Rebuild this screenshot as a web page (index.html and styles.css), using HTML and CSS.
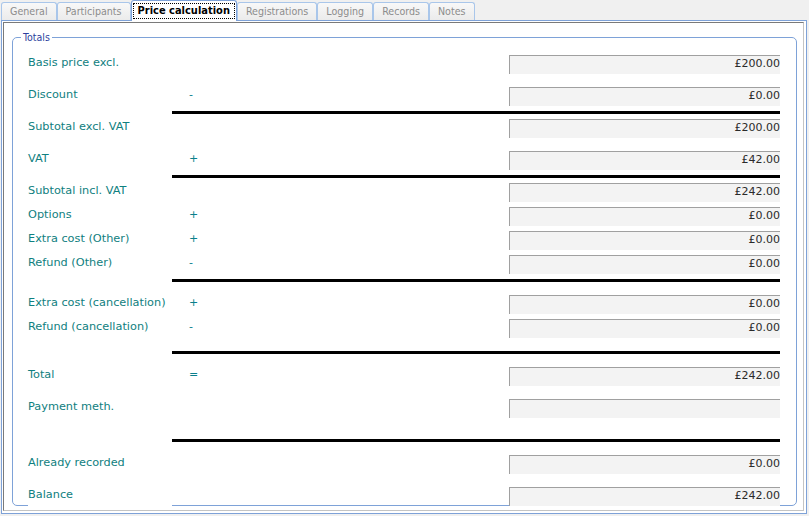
FILE: index.html
```html
<!DOCTYPE html>
<html>
<head>
	<title>Price calculation</title>
	<meta charset="utf-8">
	<link rel="stylesheet" href="styles.css">
</head>
<body>
	<div class="tabs">
		<span class="tab">General</span>
		<span class="tab">Participants</span>
		<span class="tab active"><span class="focus">Price calculation</span></span>
		<span class="tab">Registrations</span>
		<span class="tab">Logging</span>
		<span class="tab">Records</span>
		<span class="tab">Notes</span>
	</div>

	<div class="panel">
		<div class="page">
			<fieldset class="totals">
				<legend>Totals</legend>

				<div class="row first">
					<span class="label">Basis price excl.</span>
					<span class="sign"></span>
					<span class="amount">£200.00</span>
				</div>
				<div class="row">
					<span class="label">Discount</span>
					<span class="sign">-</span>
					<span class="amount">£0.00</span>
				</div>
				<div class="rule"></div>
				<div class="row near">
					<span class="label">Subtotal excl. VAT</span>
					<span class="sign"></span>
					<span class="amount">£200.00</span>
				</div>
				<div class="row">
					<span class="label">VAT</span>
					<span class="sign">+</span>
					<span class="amount">£42.00</span>
				</div>
				<div class="rule"></div>
				<div class="row near">
					<span class="label">Subtotal incl. VAT</span>
					<span class="sign"></span>
					<span class="amount">£242.00</span>
				</div>
				<div class="row near">
					<span class="label">Options</span>
					<span class="sign">+</span>
					<span class="amount">£0.00</span>
				</div>
				<div class="row near">
					<span class="label">Extra cost (Other)</span>
					<span class="sign">+</span>
					<span class="amount">£0.00</span>
				</div>
				<div class="row near">
					<span class="label">Refund (Other)</span>
					<span class="sign">-</span>
					<span class="amount">£0.00</span>
				</div>
				<div class="rule"></div>
				<div class="row">
					<span class="label">Extra cost (cancellation)</span>
					<span class="sign">+</span>
					<span class="amount">£0.00</span>
				</div>
				<div class="row near">
					<span class="label">Refund (cancellation)</span>
					<span class="sign">-</span>
					<span class="amount">£0.00</span>
				</div>
				<div class="rule far"></div>
				<div class="row">
					<span class="label">Total</span>
					<span class="sign">=</span>
					<span class="amount">£242.00</span>
				</div>
				<div class="row">
					<span class="label">Payment meth.</span>
					<span class="sign"></span>
					<span class="amount"></span>
				</div>
				<div class="rule farther"></div>
				<div class="row">
					<span class="label">Already recorded</span>
					<span class="sign"></span>
					<span class="amount">£0.00</span>
				</div>
				<div class="row last">
					<span class="label">Balance</span>
					<span class="sign"></span>
					<span class="amount">£242.00</span>
				</div>
			</fieldset>
		</div>
	</div>
</body>
</html>
```

FILE: styles.css
```css
body {
	margin: 0;
	height: 516px;
	overflow: hidden;
	background: #f0f0f0;
	font-family: "DejaVu Sans", Verdana, sans-serif;
	font-size: 11px;
}

/* tab strip */
.tabs {
	display: flex;
	align-items: flex-end;
	height: 20px;
	padding-left: 1px;
}
.tab {
	box-sizing: border-box;
	height: 18px;
	padding: 0 8px;
	border: 1px solid #a9c6ea;
	border-bottom: none;
	border-radius: 3px 3px 0 0;
	background: linear-gradient(#f8f8f8, #ebebeb);
	color: #8c8c8c;
	font-family: "DejaVu Sans Condensed", Tahoma, sans-serif;
	font-size: 10.6px;
	line-height: 16px;
}
.tab.active {
	position: relative;
	z-index: 1;
	height: 21px;
	margin-bottom: -1px;
	padding: 2px 1px 0;
	background: #fff;
	border-color: #7ea2d8;
	color: #000;
	font-size: 11px;
	font-weight: bold;
}
.focus {
	display: block;
	padding: 0 4px;
	border: 1px dotted #000;
	line-height: 14px;
}

/* page frame */
.panel {
	box-sizing: border-box;
	height: 494px;
	margin: 0 2px 2px 1px;
	padding: 1px 2px 2px 1px;
	border: 1px solid #7ea2d8;
	background: #fff;
}
.page {
	box-sizing: border-box;
	height: 100%;
	border: 1px solid;
	border-color: #7a7a7a #c4c4c4 #c4c4c4 #7a7a7a;
}

/* totals group */
.totals {
	margin: 8px 6px 0 8px;
	padding: 11px 16px 0 15px;
	min-width: 0;
	border: 1px solid #7ea2d8;
	border-radius: 5px;
}
.totals legend {
	margin-left: -7px;
	padding: 0 2px;
	color: #2e3f9e;
	font-family: "DejaVu Sans Condensed", Tahoma, sans-serif;
	font-size: 10.5px;
	line-height: 13px;
}

.row {
	display: flex;
	height: 19px;
	margin-top: 13px;
}
.row.first {
	margin-top: 0;
}
.row.near {
	margin-top: 5px;
}
.row.last {
	margin-bottom: -1px;
}
.label {
	flex: none;
	width: 144px;
	background: #fff;
	color: #0f8080;
	font-size: 11.3px;
	line-height: 15px;
	white-space: nowrap;
}
.sign {
	flex: 1;
	padding-left: 17px;
	color: #0a7f8c;
	line-height: 15px;
}
.amount {
	box-sizing: border-box;
	flex: none;
	width: 271px;
	border-top: 1px solid #a0a0a0;
	border-left: 1px solid #a0a0a0;
	background: #f3f3f3;
	color: #2a2a2a;
	text-align: right;
	line-height: 15px;
}

.rule {
	height: 3px;
	margin: 5px 0 0 144px;
	background: #000;
}
.rule.far {
	margin-top: 13px;
}
.rule.farther {
	margin-top: 21px;
}
```
